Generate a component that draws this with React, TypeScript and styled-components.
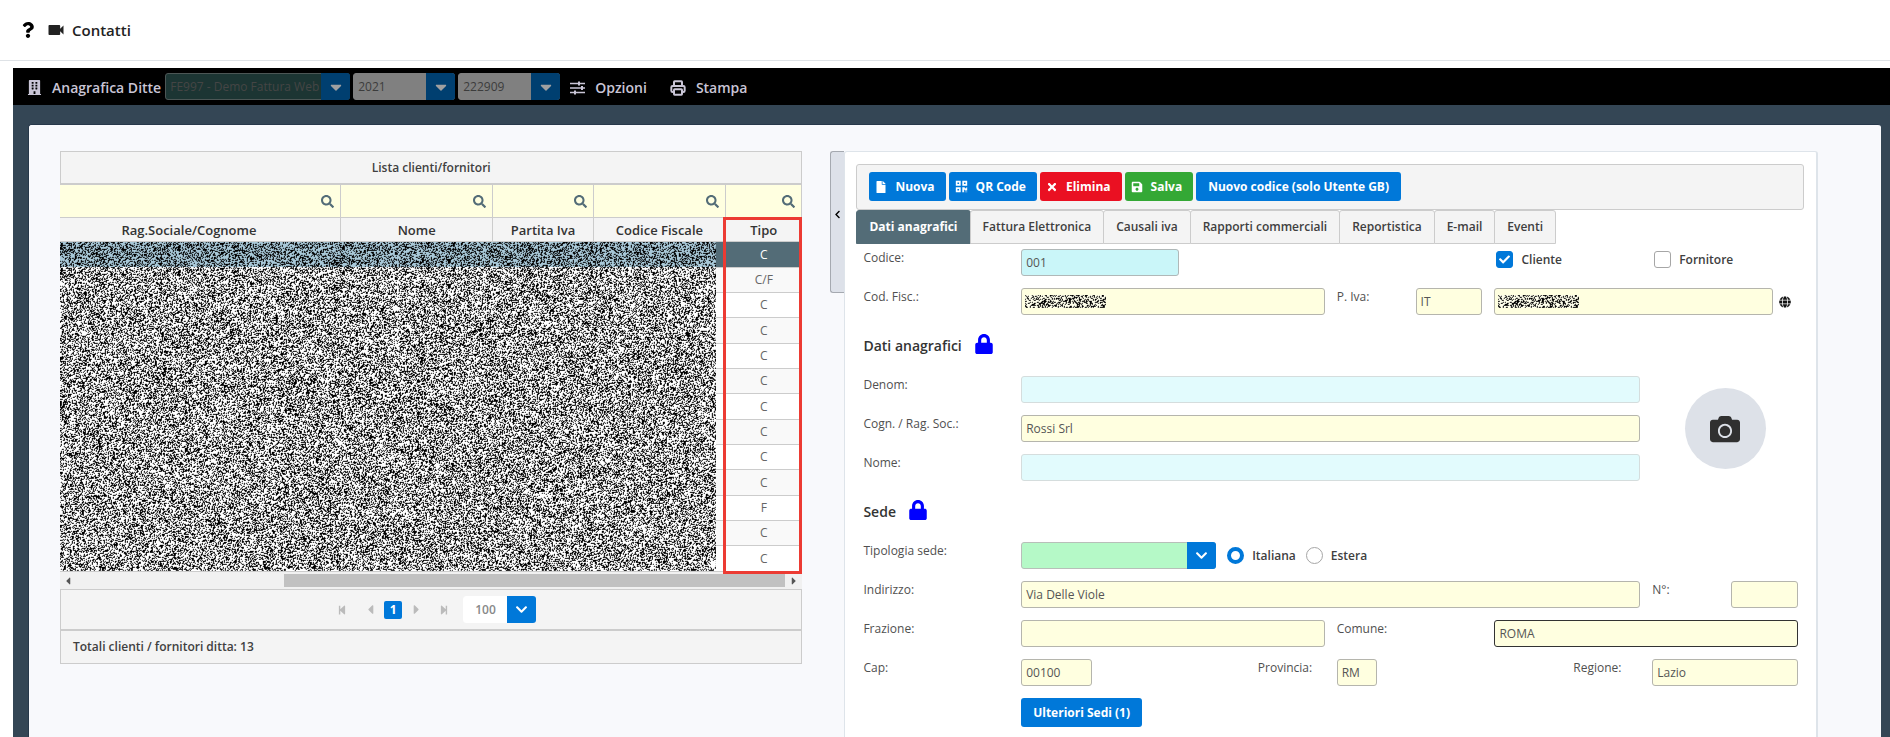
import React, { useEffect, useRef } from "react";
import styled, { createGlobalStyle, css } from "styled-components";
import {
  FaBuilding, FaCamera, FaCaretDown, FaCaretLeft, FaCaretRight, FaCheck, FaChevronDown, FaChevronLeft,
  FaFile, FaGlobe, FaLock, FaQrcode, FaQuestion, FaSave, FaSearch, FaStepBackward, FaStepForward, FaTimes,
} from "react-icons/fa";
import { MdVideocam } from "react-icons/md";
import { Printer } from "lucide-react";

const c = {
  blue: "#0078d9",
  slate: "#536c77",
  line: "#cccccc",
  grey: "#f4f4f4",
  yellow: "#ffffe0",
  text: "#404040",
};

const Global = createGlobalStyle`
  *, *::before, *::after { box-sizing: border-box; }
  body { margin: 0; background: #fff; color: ${c.text}; font: 12px/18px "Open Sans", "Noto Sans", sans-serif; }
  button, input, select { font: inherit; color: inherit; margin: 0; }
  svg { display: block; flex: none; }
`;

const Page = styled.div`
  display: flex;
  flex-direction: column;
  min-height: 100vh;
`;

const TopBar = styled.header`
  display: flex;
  align-items: center;
  height: 61px;
  padding: 0 0 1px 20px;
  border-bottom: 1px solid #dee2e6;
`;

const TopLink = styled.a`
  display: flex;
  align-items: center;
  gap: 6px;
  margin-right: 10px;
  color: #222;
  font-size: 15px;
  font-weight: 600;
  text-decoration: none;
`;

const Workspace = styled.div`
  flex: 1;
  display: flex;
  flex-direction: column;
  margin: 7px 0 0 13px;
  background: #344655;
`;

const MenuBar = styled.nav`
  display: flex;
  align-items: center;
  gap: 3px;
  height: 37px;
  padding-left: 14px;
  background: #000;
`;

const MenuItem = styled.button`
  display: flex;
  align-items: center;
  gap: 10px;
  padding: 2px 0 0;
  border: 0;
  background: none;
  color: #c9c5d6;
  font-size: 14px;
  font-weight: 600;
  &:first-child { margin-right: 1px; }
  &:nth-last-child(2) { margin: 0 20px 0 7px; }
`;

type Tone = "demo" | "dim" | "green" | "pager";
const tones = {
  demo: css`background: #1c3533; border-color: #4c5655; color: #454545;`,
  dim: css`background: #808080; border-color: #808080; color: #3c3c3c;`,
  green: css`background: #b5f9c7; border-color: #b8bfb9;`,
  pager: css`background: #fff; border-color: #fff; color: #888; padding-left: 11px;`,
};

const SelectBox = styled.span<{ $width: number }>`
  position: relative;
  display: block;
  flex: none;
  width: ${(p) => p.$width}px;
`;

const Select = styled.select<{ $tone: Tone }>`
  appearance: none;
  display: block;
  width: 100%;
  height: 27px;
  padding: 0 30px 0 4px;
  border: 1px solid;
  border-radius: 3px;
  ${(p) => tones[p.$tone]}
`;

const SelectArrow = styled.span<{ $dark: boolean }>`
  position: absolute;
  top: 0;
  right: 0;
  bottom: 0;
  width: 29px;
  display: grid;
  place-items: center;
  border-radius: 0 3px 3px 0;
  background: ${(p) => (p.$dark ? "#003f70" : c.blue)};
  color: ${(p) => (p.$dark ? "#a0a0a0" : "#fff")};
  pointer-events: none;
`;

const Content = styled.main`
  flex: 1;
  display: grid;
  grid-template-columns: minmax(0, 742fr) 42px minmax(0, 973fr);
  margin: 19px 9px 0 15px;
  padding: 26px 63px 0 31px;
  border: 1px solid #27384a;
  border-width: 1px 0 0 1px;
  border-radius: 3px 3px 0 0;
  background: #f8f9fc;
`;

const List = styled.section`
  min-width: 0;
`;

const ListBar = styled.div`
  display: flex;
  align-items: center;
  justify-content: center;
  height: 34px;
  border: 1px solid ${c.line};
  border-bottom-width: 2px;
  background: ${c.grey};
  font-weight: 600;
`;

const PagerBar = styled(ListBar)`
  height: 42px;
  padding-left: 7px;
`;

const TotalBar = styled(ListBar)`
  justify-content: flex-start;
  height: 33px;
  padding-left: 12px;
  border-top: 0;
  border-bottom-width: 1px;
`;

const TableArea = styled.div`
  position: relative;
`;

const Table = styled.table`
  width: 100%;
  table-layout: fixed;
  border-collapse: separate;
  border-spacing: 0;
  th, td { padding: 0; border-right: 1px solid ${c.line}; border-bottom: 1px solid ${c.line}; text-align: center; }
`;

const Col = styled.col<{ $w: number }>`
  width: ${(p) => p.$w}px;
`;

const FilterCell = styled.th`
  height: 33px;
  background: ${c.yellow};
`;

const FilterLabel = styled.label`
  display: flex;
  align-items: center;
  padding-right: 6px;
  color: ${c.slate};
`;

const FilterInput = styled.input`
  flex: 1;
  min-width: 0;
  height: 32px;
  border: 0;
  background: none;
`;

const HeadCell = styled.th`
  height: 24px;
  background: ${c.grey};
  color: #333;
  font-size: 13px;
  font-weight: 600;
  th&:first-child { padding-right: 22px; }
`;

const Row = styled.tr<{ $active: boolean }>`
  height: 25px;
  background: #fff;
  color: #666;
  &:nth-child(3n + 1) { height: 26px; }
  &:nth-child(even) { background: #f9f9f9; }
  ${(p) => p.$active && css`&& { background: ${c.slate}; color: #fff; }`}
`;

const Redaction = styled.div`
  position: absolute;
  top: 57px;
  left: 0;
  bottom: 1px;
  width: calc(100% * 656 / 742);
  display: grid;
  grid-template-rows: 25px minmax(0, 1fr);
`;

const Frame = styled.div`
  position: absolute;
  top: 32px;
  right: 0;
  bottom: -2px;
  width: calc(100% * 76 / 742 + 3px);
  border: 3px solid #ec3b33;
  pointer-events: none;
`;

const ScrollTrack = styled.div`
  display: flex;
  align-items: center;
  gap: 3px;
  height: 17px;
  padding: 0 2px;
  background: #f1f1f1;
  color: #555;
`;

const ScrollThumb = styled.div`
  flex: 1;
  height: 13px;
  padding-left: 28%;
  background: #c1c1c1 content-box;
`;

const PageButton = styled.button<{ $current?: boolean }>`
  display: grid;
  place-items: center;
  width: 18px;
  height: 18px;
  margin-right: 10px;
  padding: 0;
  border: 0;
  border-radius: 2px;
  background: ${(p) => (p.$current ? c.blue : "none")};
  color: ${(p) => (p.$current ? "#fff" : "#bbb")};
  font-weight: 700;
  &:nth-child(2), &:nth-child(3) { margin-right: 5px; }
`;

const Handle = styled.button`
  justify-self: end;
  display: grid;
  place-items: center end;
  width: 14px;
  height: 142px;
  padding: 0 2px 15px 0;
  border: 1px solid #a5a9b0;
  border-right: 0;
  border-radius: 3px 0 0 3px;
  background: #dde1e9;
  color: #000;
`;

const Card = styled.section`
  min-width: 0;
  padding: 12px 12px 4px 11px;
  border: 1px solid #dee4ea;
  border-width: 1px 2px 0 1px;
  border-radius: 3px 3px 0 0;
  background: #fff;
`;

const Toolbar = styled.div`
  display: flex;
  gap: 3px;
  height: 46px;
  padding: 7px 12px;
  border: 1px solid ${c.line};
  border-radius: 3px;
  background: ${c.grey};
`;

const Button = styled.button<{ $color?: string; $icon?: boolean }>`
  display: flex;
  align-items: center;
  gap: 8px;
  height: 29px;
  padding: ${(p) => (p.$icon ? "0 11px 0 6px" : "0 12px")};
  border: 0;
  border-radius: 3px;
  background: ${(p) => p.$color ?? c.blue};
  color: #fff;
  font-weight: 700;
  white-space: nowrap;
`;

const Tabs = styled.div`
  display: flex;
`;

const Tab = styled.button<{ $active: boolean }>`
  height: 34px;
  padding: 0 12px;
  border: 1px solid ${c.line};
  border-radius: 3px 3px 0 0;
  background: ${c.grey};
  font-weight: 600;
  white-space: nowrap;
  & + & { margin-left: -1px; }
  ${(p) => p.$active && css`background: ${c.slate}; border-color: ${c.slate}; color: #fff; font-weight: 700;`}
`;

const Form = styled.form`
  display: grid;
  grid-template-columns: repeat(12, minmax(0, 1fr));
  gap: 12px;
  padding: 5px 6px 0 7px;
`;

const Label = styled.label<{ $span?: number }>`
  grid-column: span ${(p) => p.$span ?? 2};
  color: #505050;
`;

const Input = styled.input<{ $tone?: "aqua" | "pale" | "focus"; $width?: number }>`
  flex: none;
  width: ${(p) => (p.$width ? `${p.$width}px` : "100%")};
  height: 27px;
  padding: 0 4px;
  border: 1px solid #b5b5ad;
  border-radius: 3px;
  outline: 0;
  background: ${c.yellow};
  color: #555;
  ${(p) => p.$tone === "aqua" && css`background: #caf6f9; border-color: #b0b8b8;`}
  ${(p) => p.$tone === "pale" && css`background: #e2fbfd; border-color: #d5dddd;`}
  ${(p) => p.$tone === "focus" && css`border-color: #333;`}
`;

const Cell = styled.div<{ $span: number; $start?: number }>`
  grid-column: ${(p) => p.$start ?? "auto"} / span ${(p) => p.$span};
  position: relative;
  display: flex;
  align-items: center;
  gap: 6px;
`;

const VatCell = styled(Cell)`
  padding-right: 7px;
  ${Input} { flex: 1; min-width: 0; }
`;

const Smudge = styled.div`
  position: absolute;
  top: 7px;
  left: 4px;
  width: 81px;
  height: 13px;
`;

const Heading = styled.h2`
  grid-column: 1 / -1;
  display: flex;
  align-items: center;
  gap: 12px;
  height: 37px;
  margin: 0;
  color: #333;
  font-size: 14px;
  font-weight: 600;
  svg { margin-bottom: 3px; }
`;

const Names = styled.div`
  grid-column: span 10;
  display: grid;
  grid-template-columns: repeat(10, minmax(0, 1fr));
  gap: 12px;
`;

const PhotoCell = styled.div`
  grid-column: span 2;
  display: grid;
  place-items: center;
`;

const Photo = styled.button`
  display: grid;
  place-items: center;
  width: 81px;
  height: 81px;
  padding: 0;
  border: 0;
  border-radius: 50%;
  background: #dde1e8;
  color: #303030;
`;

const Option = styled.label`
  display: flex;
  align-items: center;
  gap: 8px;
  height: 21px;
  font-weight: 600;
  &:not(:last-child) { margin-right: 4px; }
  ${SelectBox} + & { margin-left: 5px; }
`;

const OptionRow = styled(Cell)`
  align-items: flex-start;
  padding-left: 2px;
`;

const Mark = styled.span`
  position: relative;
  display: grid;
  width: 17px;
  height: 17px;
  color: #fff;
  svg { position: absolute; inset: 3px; pointer-events: none; }
`;

const Check = styled.input`
  appearance: none;
  width: 17px;
  height: 17px;
  border: 1px solid #a6a6a6;
  border-radius: 3px;
  background: #fff;
  &:checked { background: ${c.blue}; border-color: ${c.blue}; }
`;

const Radio = styled(Check)`
  border-radius: 50%;
  &:checked { background: #fff; border-color: ${c.blue}; border-width: 4px; }
`;

const NoiseCanvas = styled.canvas`
  display: block;
  width: 100%;
  height: 100%;
`;

const noiseColors = {
  grey: [[0, 0, 0], [255, 255, 255]],
  slate: [[0, 0, 0], [168, 200, 216]],
  ink: [[0, 0, 0], [255, 255, 236]],
};

function Noise({ kind, w, h }: { kind: keyof typeof noiseColors; w: number; h: number }) {
  const ref = useRef<HTMLCanvasElement>(null);
  useEffect(() => {
    const ctx = ref.current?.getContext("2d");
    if (!ctx) return;
    let seed = 20210;
    const random = () => {
      seed = (Math.imul(seed, 1664525) + 1013904223) >>> 0;
      return seed / 4294967296;
    };
    const dots = Array.from({ length: w * h }, () => (random() < 0.4 ? 0 : 1));
    const image = ctx.createImageData(w, h);
    const [dark, light] = noiseColors[kind];
    dots.forEach((dot, i) => {
      const near = ((dots[i + 1] ?? 1) + (dots[i + w] ?? 1)) / 2;
      const level = dot * 0.68 + near * 0.32;
      for (let k = 0; k < 3; k++) image.data[i * 4 + k] = dark[k] + (light[k] - dark[k]) * level;
      image.data[i * 4 + 3] = 255;
    });
    ctx.putImageData(image, 0, 0);
  }, [kind, w, h]);
  return <NoiseCanvas ref={ref} width={w} height={h} aria-hidden="true" />;
}

function SlidersIcon() {
  return (
    <svg width="15" height="14" viewBox="0 0 15 14" fill="none" stroke="currentColor" strokeWidth="1.5" aria-hidden="true">
      <path d="M0 2.5h15M0 7h15M0 11.5h15" />
      <path d="M9 0.5v4M12 5v4M5 9.5v4" strokeWidth="2" />
    </svg>
  );
}

function Dropdown({ label, value, width, tone }: { label: string; value: string; width: number; tone: Tone }) {
  const dark = tone === "demo" || tone === "dim";
  return (
    <SelectBox $width={width}>
      <Select aria-label={label} $tone={tone}>
        <option>{value}</option>
      </Select>
      <SelectArrow $dark={dark}>{dark ? <FaCaretDown size={18} /> : <FaChevronDown size={13} />}</SelectArrow>
    </SelectBox>
  );
}

const columns = [
  { name: "Rag.Sociale/Cognome", weight: 140 },
  { name: "Nome", weight: 76 },
  { name: "Partita Iva", weight: 50 },
  { name: "Codice Fiscale", weight: 66 },
  { name: "Tipo", weight: 38 },
];
const types = ["C", "C/F", "C", "C", "C", "C", "C", "C", "C", "C", "F", "C", "C"];
const tabs = ["Dati anagrafici", "Fattura Elettronica", "Causali iva", "Rapporti commerciali", "Reportistica", "E-mail", "Eventi"];

function CustomerList() {
  return (
    <List>
      <ListBar>Lista clienti/fornitori</ListBar>
      <TableArea>
        <Table>
          <colgroup>{columns.map((k) => <Col key={k.name} $w={k.weight} />)}</colgroup>
          <thead>
            <tr>
              {columns.map((k) => (
                <FilterCell key={k.name}>
                  <FilterLabel><FilterInput aria-label={`Filtra ${k.name}`} /><FaSearch size={13} /></FilterLabel>
                </FilterCell>
              ))}
            </tr>
            <tr>{columns.map((k) => <HeadCell key={k.name}>{k.name}</HeadCell>)}</tr>
          </thead>
          <tbody>
            {types.map((t, i) => (
              <Row key={i} $active={i === 0}><td /><td /><td /><td /><td>{t}</td></Row>
            ))}
          </tbody>
        </Table>
        <Redaction>
          <Noise kind="slate" w={656} h={25} />
          <Noise kind="grey" w={656} h={304} />
        </Redaction>
        <Frame />
      </TableArea>
      <ScrollTrack><FaCaretLeft size={12} /><ScrollThumb /><FaCaretRight size={12} /></ScrollTrack>
      <PagerBar>
        <PageButton aria-label="Prima pagina"><FaStepBackward size={10} /></PageButton>
        <PageButton aria-label="Pagina precedente"><FaCaretLeft size={15} /></PageButton>
        <PageButton $current>1</PageButton>
        <PageButton aria-label="Pagina successiva"><FaCaretRight size={15} /></PageButton>
        <PageButton aria-label="Ultima pagina"><FaStepForward size={10} /></PageButton>
        <Dropdown label="Righe per pagina" value="100" width={73} tone="pager" />
      </PagerBar>
      <TotalBar>Totali clienti / fornitori ditta: 13</TotalBar>
    </List>
  );
}

function DetailCard() {
  return (
    <Card>
      <Toolbar>
        <Button $icon><FaFile size={12} />Nuova</Button>
        <Button $icon><FaQrcode size={13} />QR Code</Button>
        <Button $icon $color="#ea1022"><FaTimes size={12} />Elimina</Button>
        <Button $icon $color="#34a835"><FaSave size={12} />Salva</Button>
        <Button>Nuovo codice (solo Utente GB)</Button>
      </Toolbar>
      <Tabs role="tablist">
        {tabs.map((t, i) => <Tab key={t} role="tab" aria-selected={i === 0} $active={i === 0}>{t}</Tab>)}
      </Tabs>
      <Form onSubmit={(e) => e.preventDefault()}>
        <Label htmlFor="codice">Codice:</Label>
        <Cell $span={3}><Input id="codice" $tone="aqua" $width={158} defaultValue="001" /></Cell>
        <OptionRow $span={2} $start={9}>
          <Option><Mark><Check type="checkbox" defaultChecked /><FaCheck size={11} /></Mark>Cliente</Option>
        </OptionRow>
        <OptionRow $span={2}>
          <Option><Mark><Check type="checkbox" /></Mark>Fornitore</Option>
        </OptionRow>

        <Label htmlFor="cf">Cod. Fisc.:</Label>
        <Cell $span={4}><Input id="cf" /><Smudge><Noise kind="ink" w={81} h={13} /></Smudge></Cell>
        <Label htmlFor="piva" $span={1}>P. Iva:</Label>
        <Cell $span={1}><Input id="piva" defaultValue="IT" /></Cell>
        <VatCell $span={4}>
          <Input aria-label="Numero partita IVA" /><Smudge><Noise kind="ink" w={81} h={13} /></Smudge>
          <FaGlobe size={12} color="#111" />
        </VatCell>

        <Heading>Dati anagrafici<FaLock size={20} color="#00f" /></Heading>

        <Names>
          <Label htmlFor="denom">Denom:</Label>
          <Cell $span={8}><Input id="denom" $tone="pale" /></Cell>
          <Label htmlFor="cogn">Cogn. / Rag. Soc.:</Label>
          <Cell $span={8}><Input id="cogn" defaultValue="Rossi Srl" /></Cell>
          <Label htmlFor="nome">Nome:</Label>
          <Cell $span={8}><Input id="nome" $tone="pale" /></Cell>
        </Names>
        <PhotoCell><Photo type="button" aria-label="Foto"><FaCamera size={30} /></Photo></PhotoCell>

        <Heading>Sede<FaLock size={20} color="#00f" /></Heading>

        <Label as="span">Tipologia sede:</Label>
        <Cell $span={10}>
          <Dropdown label="Tipologia sede" value="" width={195} tone="green" />
          <Option><Radio type="radio" name="sede" defaultChecked />Italiana</Option>
          <Option><Radio type="radio" name="sede" />Estera</Option>
        </Cell>

        <Label htmlFor="ind">Indirizzo:</Label>
        <Cell $span={8}><Input id="ind" defaultValue="Via Delle Viole" /></Cell>
        <Label htmlFor="num" $span={1}>N°:</Label>
        <Cell $span={1}><Input id="num" /></Cell>

        <Label htmlFor="fraz">Frazione:</Label>
        <Cell $span={4}><Input id="fraz" /></Cell>
        <Label htmlFor="com">Comune:</Label>
        <Cell $span={4}><Input id="com" $tone="focus" defaultValue="ROMA" /></Cell>

        <Label htmlFor="cap">Cap:</Label>
        <Cell $span={3}><Input id="cap" $width={71} defaultValue="00100" /></Cell>
        <Label htmlFor="prov" $span={1}>Provincia:</Label>
        <Cell $span={3}><Input id="prov" $width={40} defaultValue="RM" /></Cell>
        <Label htmlFor="reg" $span={1}>Regione:</Label>
        <Cell $span={2}><Input id="reg" defaultValue="Lazio" /></Cell>

        <Cell $span={8} $start={3}><Button type="button">Ulteriori Sedi (1)</Button></Cell>
      </Form>
    </Card>
  );
}

export default function App() {
  return (
    <Page>
      <Global />
      <TopBar>
        <TopLink href="#aiuto" aria-label="Aiuto"><FaQuestion size={16} color="#000" /></TopLink>
        <TopLink href="#contatti"><MdVideocam size={20} />Contatti</TopLink>
      </TopBar>
      <Workspace>
        <MenuBar>
          <MenuItem><FaBuilding size={15} />Anagrafica Ditte</MenuItem>
          <Dropdown label="Ditta" value="FE997 - Demo Fattura Web" width={185} tone="demo" />
          <Dropdown label="Anno" value="2021" width={102} tone="dim" />
          <Dropdown label="Codice" value="222909" width={102} tone="dim" />
          <MenuItem><SlidersIcon />Opzioni</MenuItem>
          <MenuItem><Printer size={16} strokeWidth={3} />Stampa</MenuItem>
        </MenuBar>
        <Content>
          <CustomerList />
          <Handle aria-label="Comprimi elenco"><FaChevronLeft size={9} /></Handle>
          <DetailCard />
        </Content>
      </Workspace>
    </Page>
  );
}
